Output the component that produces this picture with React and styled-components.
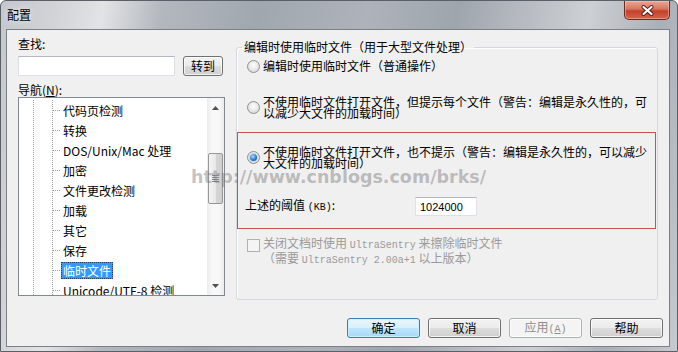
import React from 'react'
import styled, { createGlobalStyle } from 'styled-components'

const UI_FONT = `"Noto Sans CJK SC", "Noto Sans", sans-serif`

const GlobalStyle = createGlobalStyle`
  html, body {
    margin: 0;
    padding: 0;
    background: #ffffff;
  }
  body {
    font-family: ${UI_FONT};
    font-size: 12px;
    color: #000;
  }
`

const Window = styled.div`
  position: relative;
  width: 678px;
  height: 352px;
  box-sizing: border-box;
  display: flex;
  flex-direction: column;
  border: 1px solid #5b6068;
  border-radius: 6px 6px 0 0;
  overflow: hidden;
  background: linear-gradient(
    100deg,
    #c4c7cc 0%,
    #d2d4d7 8%,
    #e2e3e5 14%,
    #b3b8be 22%,
    #a1a7af 35%,
    #aeb3ba 50%,
    #9fa5ad 62%,
    #b9bdc3 72%,
    #cdd0d4 80%,
    #aab0b7 90%,
    #c6c9cd 100%
  );
`

const TitleBar = styled.div`
  height: 28px;
  flex-shrink: 0;
  display: flex;
  align-items: flex-start;
  padding: 0 7px 0 6px;
`

const Title = styled.span`
  align-self: center;
  font-size: 12px;
  line-height: 14px;
  color: #000;
  text-shadow: 0 0 6px rgba(255, 255, 255, 0.9);
`

const CloseButton = styled.div`
  margin-left: auto;
  width: 46px;
  height: 19px;
  box-sizing: border-box;
  border: 1px solid #6b2a22;
  border-top: none;
  border-radius: 0 0 5px 5px;
  background: linear-gradient(#e9a697 0%, #d9745f 45%, #c4402a 55%, #d2654c 100%);
  box-shadow: inset 0 0 0 1px rgba(255, 210, 200, 0.45);
  display: flex;
  align-items: center;
  justify-content: center;
`

const Client = styled.div`
  flex: 1;
  margin: 0 7px 4px 5px;
  background: #f0f0f0;
  border: 1px solid #7b8087;
  display: flex;
  flex-direction: column;
`

const Main = styled.div`
  display: flex;
  gap: 11px;
  padding: 7px 11px 0 11px;
`

const LeftColumn = styled.div`
  width: 207px;
  display: flex;
  flex-direction: column;
`

const FieldLabel = styled.div`
  line-height: 14px;
  margin-top: ${p => p.$mt || 0}px;
`

const SearchRow = styled.div`
  display: flex;
  gap: 8px;
  margin-top: 5px;
`

const TextInput = styled.input`
  width: ${p => p.$w}px;
  height: ${p => p.$h || 20}px;
  box-sizing: border-box;
  border: 1px solid #dde1e6;
  border-top-color: #b4b8be;
  background: #fff;
  padding: 0 4px;
  font-family: "Liberation Sans", Arial, sans-serif;
  font-size: 11px;
  color: #000;
  outline: none;
`

const Button = styled.button`
  width: ${p => p.$w || 73}px;
  height: 20px;
  box-sizing: border-box;
  padding: 0;
  font-family: ${UI_FONT};
  font-size: 12px;
  line-height: 16px;
  border-radius: 3px;
  border: 1px solid ${p => (p.$primary ? '#3c7fb1' : p.disabled ? '#adb2b5' : '#707070')};
  color: ${p => (p.disabled ? '#8d8d8d' : '#000')};
  background: ${p =>
    p.$primary
      ? 'linear-gradient(#eaf6fd, #d9f0fc 50%, #bee6fd 50%, #a7d9f5)'
      : p.disabled
      ? '#f4f4f4'
      : 'linear-gradient(#f2f2f2, #ebebeb 50%, #dddddd 50%, #cfcfcf)'};
  box-shadow: inset 0 0 0 1px ${p => (p.$primary ? 'rgba(200,240,255,0.9)' : 'rgba(255,255,255,0.75)')};
`

const TreeBox = styled.div`
  height: 199px;
  box-sizing: border-box;
  border: 1px solid #828790;
  background: #fff;
  display: flex;
`

const TreeItems = styled.div`
  flex: 1;
  overflow: hidden;
  padding-top: 2px;
`

const TreeRow = styled.div`
  height: 20px;
  display: flex;
  align-items: center;
`

const Guides = styled.span`
  width: 42px;
  align-self: stretch;
  flex-shrink: 0;
  display: flex;
  align-items: center;
  justify-content: flex-end;
  background-image: linear-gradient(to bottom, #a0a0a0 50%, transparent 50%),
    linear-gradient(to bottom, #a0a0a0 50%, transparent 50%);
  background-size: 1px 2px, 1px 2px;
  background-repeat: repeat-y;
  background-position: 14px 0, 33px 0;
`

const Connector = styled.span`
  width: 7px;
  height: 0;
  border-top: 1px dotted #a0a0a0;
  margin-right: 1px;
`

const TreeLabel = styled.span`
  padding: 1px 2px;
  line-height: 15px;
  white-space: nowrap;
  background: ${p => (p.$selected ? '#3399ff' : 'transparent')};
  color: ${p => (p.$selected ? '#fff' : '#000')};
  outline: ${p => (p.$selected ? '1px dotted #1d3d66' : 'none')};
  outline-offset: -1px;
`

const ScrollBar = styled.div`
  width: 17px;
  flex-shrink: 0;
  display: flex;
  flex-direction: column;
  background: linear-gradient(to right, #ececec, #f8f8f8 30%, #f8f8f8 70%, #ececec);
`

const ScrollArrow = styled.div`
  height: 19px;
  display: flex;
  align-items: center;
  justify-content: center;
`

const ScrollTrack = styled.div`
  flex: 1;
  display: flex;
  flex-direction: column;
  align-items: center;
`

const ScrollThumb = styled.div`
  width: 15px;
  height: 51px;
  box-sizing: border-box;
  border: 1px solid #979797;
  border-radius: 2px;
  background: linear-gradient(to right, #f4f4f4, #e8e8e8 50%, #d6d6d6 51%, #cfcfcf);
  display: flex;
  align-items: center;
  justify-content: center;
`

const RightColumn = styled.div`
  flex: 1;
  margin-top: 4px;
`

const GroupBox = styled.fieldset`
  margin: 0;
  padding: 0;
  height: 259px;
  box-sizing: border-box;
  border: 1px solid #d5d9dd;
  border-radius: 3px;
  box-shadow: inset 1px 1px 0 #fff;
`

const Legend = styled.legend`
  margin-left: 5px;
  padding: 0 2px;
  line-height: 12px;
`

const OptionRow = styled.label`
  display: flex;
  align-items: center;
  gap: 3px;
  margin-left: ${p => p.$ml}px;
  margin-top: ${p => p.$mt}px;
  line-height: ${p => p.$lh || 14}px;
  white-space: nowrap;
`

const RadioCircle = styled.span`
  width: 13px;
  height: 13px;
  flex-shrink: 0;
  box-sizing: border-box;
  border-radius: 50%;
  border: 1px solid #8e8f8f;
  background: radial-gradient(circle at 50% 40%, #ffffff, #e6e6e6 55%, #cdcdcd);
  display: flex;
  align-items: center;
  justify-content: center;

  &::after {
    content: '';
    display: ${p => (p.$checked ? 'block' : 'none')};
    width: 7px;
    height: 7px;
    border-radius: 50%;
    background: radial-gradient(circle at 40% 35%, #a8dcff, #2a72c4 60%, #12457f);
    box-shadow: 0 0 1px 1px #b9dcf6;
  }
`

const AlertBox = styled.div`
  margin: 14px 1px 0 0;
  border: 1px solid #c8505a;
  padding: 13px 0 12px 0;
`

const ThresholdRow = styled.div`
  display: flex;
  align-items: center;
  margin: 29px 0 0 7px;
`

const ThresholdLabel = styled.span`
  width: 170px;
  line-height: 14px;
`

const Mono = styled.span`
  font-family: "Liberation Mono", "DejaVu Sans Mono", monospace;
  font-size: 10px;
`

const CheckRow = styled.div`
  display: flex;
  align-items: flex-start;
  gap: 3px;
  margin: 8px 0 0 10px;
  line-height: 12px;
  color: #9a9a9a;
  white-space: nowrap;
`

const CheckBox = styled.span`
  width: 13px;
  height: 13px;
  flex-shrink: 0;
  margin-top: 2px;
  box-sizing: border-box;
  border: 1px solid #b1b1b1;
  background: #f4f4f4;
`

const ButtonRow = styled.div`
  margin-top: auto;
  display: flex;
  justify-content: flex-end;
  gap: 8px;
  padding: 0 6px 8px 0;
`

const Watermark = styled.div`
  position: absolute;
  left: 190px;
  top: 166px;
  font-family: "DejaVu Sans", Verdana, sans-serif;
  font-weight: bold;
  font-size: 17.5px;
  line-height: 20px;
  color: rgba(120, 120, 120, 0.45);
  white-space: nowrap;
  pointer-events: none;
`

const treeItems = [
  '代码页检测',
  '转换',
  'DOS/Unix/Mac 处理',
  '加密',
  '文件更改检测',
  '加载',
  '其它',
  '保存',
  '临时文件',
  'Unicode/UTF-8 检测',
]

const CloseGlyph = () => (
  <svg width="13" height="11" viewBox="0 0 13 11">
    <path d="M2.5 2 L10.5 9 M10.5 2 L2.5 9" stroke="#5a1a12" strokeWidth="4" strokeLinecap="round" />
    <path d="M2.5 2 L10.5 9 M10.5 2 L2.5 9" stroke="#fff" strokeWidth="2.2" strokeLinecap="round" />
  </svg>
)

const Arrow = ({ down }) => (
  <svg width="7" height="4" viewBox="0 0 7 4">
    <polygon points={down ? '0,0 7,0 3.5,4' : '0,4 7,4 3.5,0'} fill="#505050" />
  </svg>
)

const Grip = () => (
  <svg width="7" height="8" viewBox="0 0 7 8">
    {[0, 2, 4, 6].map(y => (
      <rect key={y} x="0" y={y} width="7" height="1" fill="#8a8a8a" />
    ))}
  </svg>
)

function NavTree({ items, selected, thumbTop }) {
  return (
    <TreeBox>
      <TreeItems>
        {items.map(item => (
          <TreeRow key={item}>
            <Guides>
              <Connector />
            </Guides>
            <TreeLabel $selected={item === selected}>{item}</TreeLabel>
          </TreeRow>
        ))}
      </TreeItems>
      <ScrollBar>
        <ScrollArrow>
          <Arrow />
        </ScrollArrow>
        <ScrollTrack>
          <ScrollThumb style={{ marginTop: thumbTop }}>
            <Grip />
          </ScrollThumb>
        </ScrollTrack>
        <ScrollArrow>
          <Arrow down />
        </ScrollArrow>
      </ScrollBar>
    </TreeBox>
  )
}

export default function App() {
  return (
    <>
      <GlobalStyle />
      <Window>
        <TitleBar>
          <Title>配置</Title>
          <CloseButton>
            <CloseGlyph />
          </CloseButton>
        </TitleBar>

        <Client>
          <Main>
            <LeftColumn>
              <FieldLabel>查找:</FieldLabel>
              <SearchRow>
                <TextInput $w={157} />
                <Button $w={40}>转到</Button>
              </SearchRow>
              <FieldLabel $mt={7}>
                导航(<u>N</u>):
              </FieldLabel>
              <NavTree items={treeItems} selected="临时文件" thumbTop={36} />
            </LeftColumn>

            <RightColumn>
              <GroupBox>
                <Legend>编辑时使用临时文件（用于大型文件处理）</Legend>

                <OptionRow $ml={10} $mt={6}>
                  <RadioCircle />
                  <span>编辑时使用临时文件（普通操作）</span>
                </OptionRow>

                <OptionRow $ml={10} $mt={23} $lh={11}>
                  <RadioCircle />
                  <span>
                    不使用临时文件打开文件，但提示每个文件（警告：编辑是永久性的，可
                    <br />
                    以减少大文件的加载时间）
                  </span>
                </OptionRow>

                <AlertBox>
                  <OptionRow $ml={9} $mt={0} $lh={11}>
                    <RadioCircle $checked />
                    <span>
                      不使用临时文件打开文件，也不提示（警告：编辑是永久性的，可以减少
                      <br />
                      大文件的加载时间）
                    </span>
                  </OptionRow>
                  <ThresholdRow>
                    <ThresholdLabel>
                      上述的阈值 <Mono>(KB)</Mono>:
                    </ThresholdLabel>
                    <TextInput $w={62} $h={19} defaultValue="1024000" />
                  </ThresholdRow>
                </AlertBox>

                <CheckRow>
                  <CheckBox />
                  <span>
                    关闭文档时使用 <Mono>UltraSentry</Mono> 来擦除临时文件
                    <br />
                    （需要 <Mono>UltraSentry 2.00a+1</Mono> 以上版本）
                  </span>
                </CheckRow>
              </GroupBox>
            </RightColumn>
          </Main>

          <ButtonRow>
            <Button $primary>确定</Button>
            <Button>取消</Button>
            <Button disabled>
              应用<Mono>(<u>A</u>)</Mono>
            </Button>
            <Button>帮助</Button>
          </ButtonRow>
        </Client>

        <Watermark>http://www.cnblogs.com/brks/</Watermark>
      </Window>
    </>
  )
}
